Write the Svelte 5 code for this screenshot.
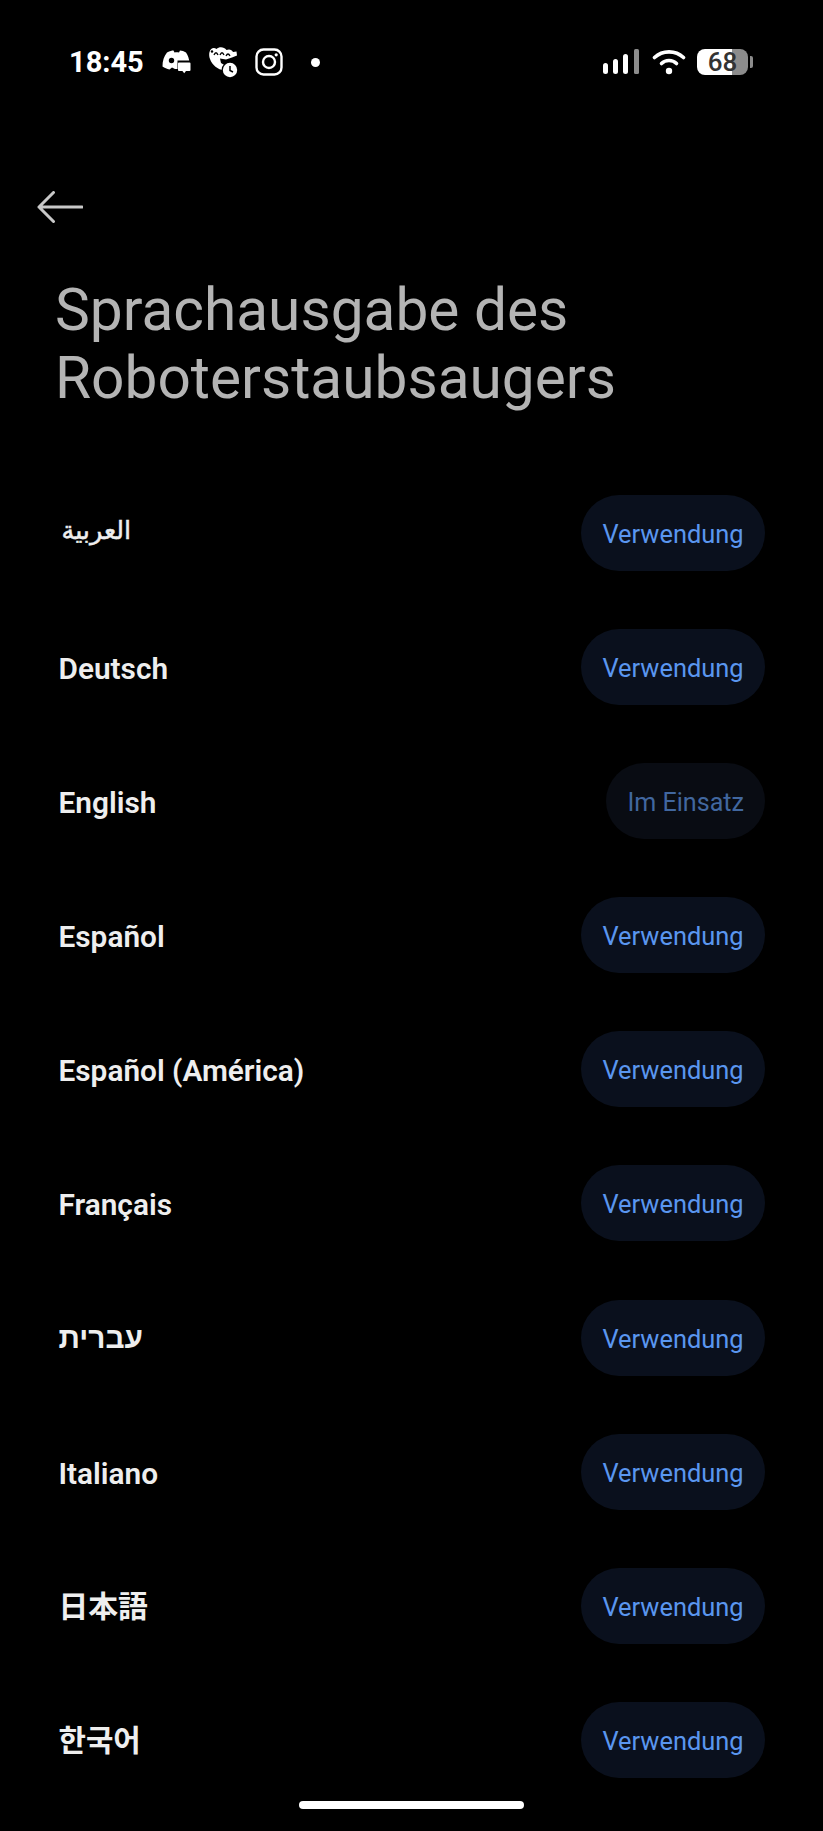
<script>
  const languages = [
    { name: 'العربية', cls: 'arabic', label: 'Verwendung' },
    { name: 'Deutsch', label: 'Verwendung' },
    { name: 'English', label: 'Im Einsatz', active: true },
    { name: 'Español', label: 'Verwendung' },
    { name: 'Español (América)', label: 'Verwendung' },
    { name: 'Français', label: 'Verwendung' },
    { name: 'עברית', cls: 'hebrew', label: 'Verwendung' },
    { name: 'Italiano', label: 'Verwendung' },
    { name: '日本語', cls: 'cjk', label: 'Verwendung' },
    { name: '한국어', cls: 'korean', label: 'Verwendung' }
  ];
</script>

<div class="screen">
  <header class="status">
    <div class="status-left">
      <span class="time">18:45</span>
      <svg class="ic-discord" width="30" height="26" viewBox="0 0 30 26">
        <path fill="#fff" d="M6 3.5 C9 2 11 1.6 12.5 1.6 L13.5 3.4 C15 3.2 16.5 3.2 18 3.4 L19 1.6 C21 1.8 23 2.4 25 3.5 C27 6.5 28 9.5 28.4 13 L18 13 L18 20 L14 20 L11 18.5 L8.5 20.5 C6 20 3.5 19 1.5 17.6 C1.4 12 3 7 6 3.5 Z" />
        <circle cx="10.5" cy="11.5" r="2.7" fill="#000" />
        <path fill="#000" d="M16.5 11.5 h13 v13 h-13 z" />
        <path fill="#fff" d="M18 13.5 h10.5 a1 1 0 0 1 1 1 v6.5 a1 1 0 0 1 -1 1 h-3.5 l-1.8 2.2 l-1.8 -2.2 h-3.4 a1 1 0 0 1 -1 -1 v-6.5 a1 1 0 0 1 1 -1 z" />
      </svg>
      <svg class="ic-croc" width="32" height="32" viewBox="0 0 32 32">
        <path fill="#fff" d="M2.5 6 C3.5 2 7 1 9.5 3 C12 0.5 17 0.5 19.5 4 C22 2.8 25 3.5 26 6 L29.5 5.5 L30 9.5 L25 11.5 L19 13.5 L13 12.5 L14 17 L19 20 L17 24 C11 24 5 19 3 13 C2 10.5 2 8 2.5 6 Z" />
        <path fill="none" stroke="#000" stroke-width="1.3" d="M7 9 Q9 4.5 11 9 M13 9 Q15 4.5 17 9 M19 10 Q21 6 23 10" />
        <circle cx="5" cy="5.5" r="1.2" fill="#000" />
        <circle cx="23" cy="24" r="8.4" fill="#000" />
        <circle cx="23" cy="24" r="7.2" fill="#fff" />
        <path fill="none" stroke="#000" stroke-width="1.5" d="M23 20 v4.5 l3 1.5" />
      </svg>
      <svg class="ic-insta" width="28" height="28" viewBox="0 0 28 28">
        <rect x="1.5" y="1.5" width="25" height="25" rx="7" fill="none" stroke="#fff" stroke-width="2.4" />
        <circle cx="14" cy="14" r="6" fill="none" stroke="#fff" stroke-width="2.4" />
        <circle cx="21.2" cy="6.8" r="1.6" fill="#fff" />
      </svg>
      <span class="dot"></span>
    </div>
    <div class="status-right">
      <svg width="36" height="26" viewBox="0 0 36 26">
        <rect x="0" y="14" width="5" height="11" rx="2.5" fill="#fff" />
        <rect x="10" y="10" width="5" height="15" rx="2.5" fill="#fff" />
        <rect x="20" y="5" width="5" height="20" rx="2.5" fill="#fff" />
        <rect x="31" y="0" width="5" height="25" rx="1.5" fill="#8c8c8c" />
      </svg>
      <svg class="ic-wifi" width="34" height="26" viewBox="0 0 34 26">
        <path fill="none" stroke="#fff" stroke-width="3.6" stroke-linecap="round" d="M2.5 8.5 C10.5 1 23.5 1 31.5 8.5" />
        <path fill="none" stroke="#fff" stroke-width="3.6" stroke-linecap="round" d="M9.5 14.5 C13.5 10.5 20.5 10.5 24.5 14.5" />
        <circle cx="17" cy="22" r="3.2" fill="#fff" />
      </svg>
      <div class="battery">
        <div class="battery-body"><span>68</span></div>
        <span class="battery-tip"></span>
      </div>
    </div>
  </header>

  <button class="back" aria-label="Zurück">
    <svg width="46" height="32" viewBox="0 0 46 32">
      <path fill="none" stroke="#c8c8c8" stroke-width="3" stroke-linecap="round" stroke-linejoin="round" d="M45 16 H2 M16.5 1.5 L2 16 L16.5 30.5" />
    </svg>
  </button>

  <h1>Sprachausgabe des<br />Roboterstaubsaugers</h1>

  <ul class="list">
    {#each languages as lang}
      <li>
        <span class="name {lang.cls || ''}">{lang.name}</span>
        <button class="pill" class:active={lang.active}>{lang.label}</button>
      </li>
    {/each}
  </ul>

  <div class="home"></div>
</div>

<style>
  :global(body) {
    margin: 0;
    background: #000;
  }

  .screen {
    position: relative;
    width: 823px;
    height: 1831px;
    overflow: hidden;
    background: #000;
    font-family: Roboto, "Noto Sans", sans-serif;
  }

  .status {
    display: flex;
    justify-content: space-between;
    align-items: center;
    height: 32px;
    padding: 46px 0 0 69px;
    margin-right: 70px;
  }

  .status-left,
  .status-right {
    display: flex;
    align-items: center;
  }

  .time {
    font-size: 29px;
    font-weight: 700;
    color: #fff;
    margin-right: 17px;
  }

  .ic-croc {
    margin-left: 16px;
  }

  .ic-insta {
    margin-left: 16px;
  }

  .dot {
    width: 9px;
    height: 9px;
    border-radius: 50%;
    background: #fff;
    margin-left: 28px;
  }

  .ic-wifi {
    margin-left: 13px;
  }

  .battery {
    display: flex;
    align-items: center;
    margin-left: 11px;
  }

  .battery-body {
    width: 51px;
    height: 26px;
    border-radius: 8px;
    background: linear-gradient(90deg, #fff 0 68%, #8c8c8c 68% 100%);
    text-align: center;
    font-size: 26px;
    line-height: 26px;
    font-weight: 500;
    color: #333;
  }

  .battery-tip {
    width: 3px;
    height: 12px;
    margin-left: 2px;
    border-radius: 0 2px 2px 0;
    background: #8c8c8c;
  }

  .back {
    display: block;
    margin: 113px 0 0 37px;
    padding: 0;
    border: 0;
    background: none;
    line-height: 0;
  }

  h1 {
    margin: 53px 0 0 55px;
    font-size: 58.6px;
    line-height: 68px;
    font-weight: 400;
    color: #b4b4b4;
  }

  .list {
    list-style: none;
    margin: 83px 0 0;
    padding: 0 58px 0 58.5px;
  }

  li {
    display: flex;
    justify-content: space-between;
    align-items: center;
    height: 76px;
    margin-bottom: 58.1px;
  }

  .name {
    padding-top: 3px;
    font-size: 29.8px;
    font-weight: 600;
    color: #eee;
  }

  .arabic {
    padding-top: 0;
    font-family: "DejaVu Sans", sans-serif;
    font-weight: 400;
    font-size: 25.5px;
    margin: -7px 0 0 3px;
    -webkit-text-stroke: 0.5px #eee;
  }

  .hebrew {
    padding-top: 1px;
    font-family: "Liberation Sans", sans-serif;
    font-weight: 700;
  }

  .cjk {
    padding-top: 0;
    margin-top: -3px;
    font-family: "Noto Sans CJK JP", sans-serif;
    font-weight: 700;
  }

  .korean {
    padding-top: 0;
    margin-top: -3px;
    font-family: "Noto Sans CJK KR", sans-serif;
    font-weight: 700;
  }

  .pill {
    height: 76px;
    padding: 2px 21.5px 0;
    border: 0;
    border-radius: 38px;
    background: #0a101d;
    color: #5a96ef;
    font-family: inherit;
    font-size: 25.4px;
    font-weight: 400;
  }

  .pill.active {
    padding: 2px 21px 0;
    font-size: 25.1px;
    background: #090c13;
    color: #41679f;
  }

  .home {
    position: absolute;
    left: 299px;
    bottom: 22px;
    width: 225px;
    height: 8px;
    border-radius: 4px;
    background: #fff;
  }
</style>
